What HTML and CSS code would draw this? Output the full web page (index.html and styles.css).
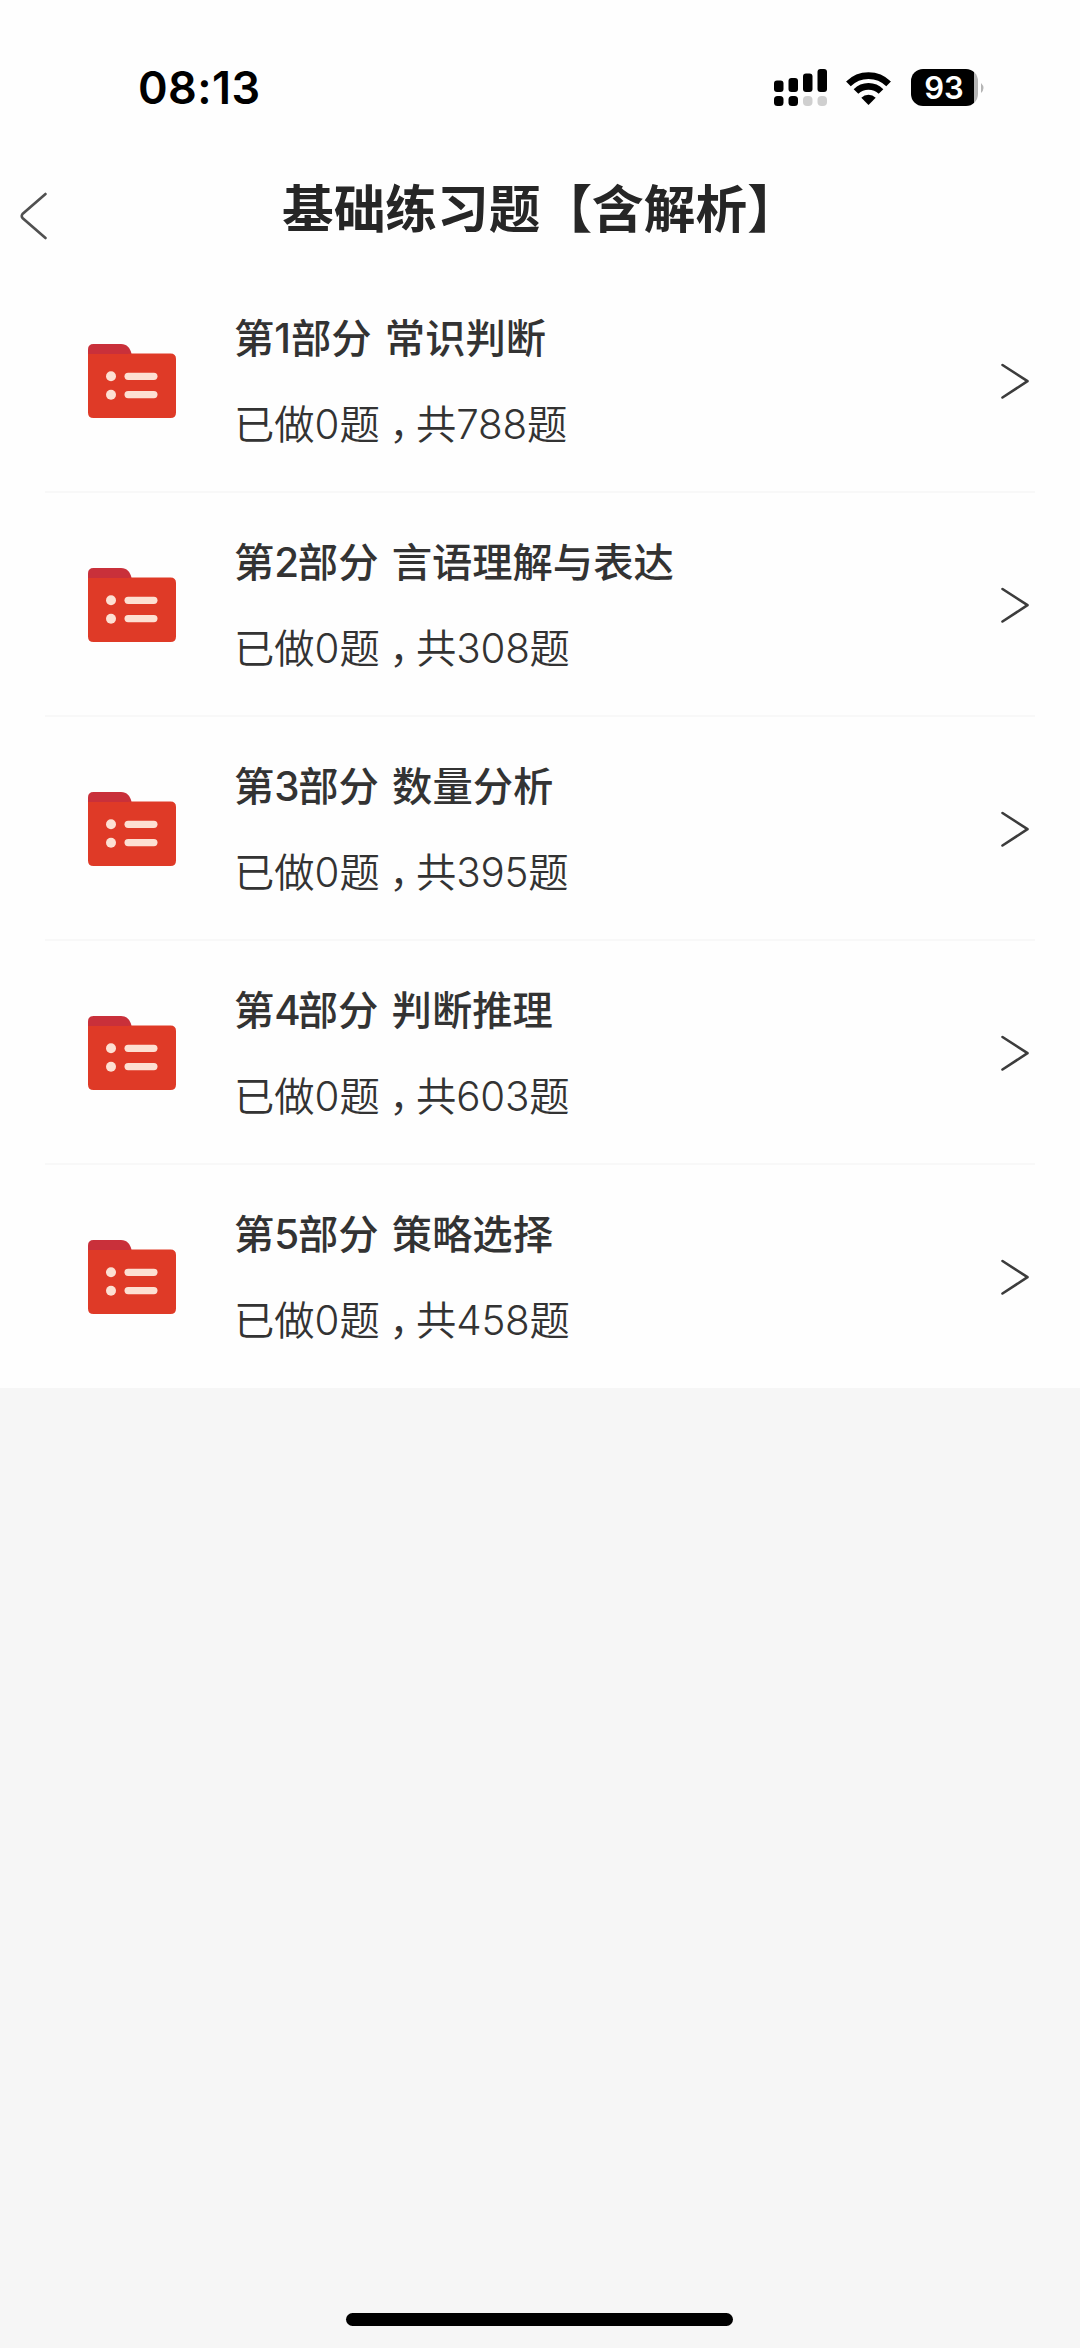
FILE: index.html
```html
<!DOCTYPE html>
<html lang="zh-CN">
<head>
<meta charset="utf-8">
<title>基础练习题【含解析】</title>
<link rel="stylesheet" href="styles.css">
</head>
<body>
<svg class="symbols" aria-hidden="true">
  <symbol id="folder" viewBox="0 0 88 74">
    <path d="M0 12V5.500Q0 0 5.500 0H33C39 0 42 4 43.500 9.500V14H0Z" fill="#c9303a"/>
    <path d="M0 10H39Q42 9.500 44 9.500H82.500Q88 9.500 88 15V68.500Q88 74 82.500 74H5.500Q0 74 0 68.500Z" fill="#df3a27"/>
    <g fill="#fde0d3"><circle cx="23" cy="32.300" r="5"/><circle cx="23" cy="50.800" r="5"/><rect x="36.500" y="28.700" width="33" height="7.200" rx="3.600"/><rect x="36.500" y="47" width="33" height="7.200" rx="3.600"/></g>
  </symbol>
  <symbol id="chevron" viewBox="0 0 30 38">
    <path d="M2.500 3L27.500 19.200 2.500 35.500" fill="none" stroke="#3c3c3c" stroke-width="2.600" stroke-linecap="round" stroke-linejoin="round"/>
  </symbol>
</svg>
<div class="screen">
  <div class="status">
    <time class="clock">08:13</time>
    <div class="indicators">
      <svg class="signal" width="53" height="38" viewBox="0 0 53 38">
        <rect x="0" y="11.500" width="9.500" height="11.500" rx="3"/><rect x="14.500" y="9" width="9.500" height="14" rx="3"/><rect x="29" y="4.500" width="9.500" height="18.500" rx="3"/><rect x="43.500" y="0" width="9.500" height="23" rx="3"/>
        <rect x="0" y="27" width="9.500" height="10" rx="3.500"/><rect x="14.500" y="27" width="9.500" height="10" rx="3.500"/>
        <g fill="#cfcfcf"><rect x="29" y="27" width="9.500" height="10" rx="4"/><rect x="43.500" y="27" width="9.500" height="10" rx="4"/></g>
      </svg>
      <svg class="wifi" width="45" height="35" viewBox="0 0 45 35">
        <g fill="none" stroke="#000" stroke-width="6.600"><path d="M2.400 12.900A28.500 28.500 0 0 1 42.600 12.900"/><path d="M10 20.500A17.700 17.700 0 0 1 35 20.500"/></g>
        <path d="M22.500 34L15.300 26.800A10.200 10.200 0 0 1 29.700 26.800Z"/>
      </svg>
      <div class="battery"><span class="level">93</span><svg width="5" height="10" viewBox="0 0 5 10"><path d="M0 0Q5 5 0 10Z" fill="#b5b5b5"/></svg></div>
    </div>
  </div>
  <header class="nav">
    <svg class="back" width="28" height="48" viewBox="0 0 28 48"><path d="M25.500 2L2.500 22Q1 24 2.500 26L25.500 46" fill="none" stroke="#505050" stroke-width="2.600" stroke-linecap="round"/></svg>
    <h1 class="heading">基础练习题【含解析】</h1>
  </header>
  <ul class="list">
    <li class="row"><svg class="folder"><use href="#folder"/></svg><div class="info"><h2 class="name">第1部分 常识判断</h2><p class="count">已做0题<span class="comma">，</span>共<span class="total">788</span>题</p></div><svg class="chevron"><use href="#chevron"/></svg></li>
    <li class="row"><svg class="folder"><use href="#folder"/></svg><div class="info"><h2 class="name">第<span class="digit">2</span>部分 言语理解与表达</h2><p class="count">已做0题<span class="comma">，</span>共<span class="total">308</span>题</p></div><svg class="chevron"><use href="#chevron"/></svg></li>
    <li class="row"><svg class="folder"><use href="#folder"/></svg><div class="info"><h2 class="name">第<span class="digit">3</span>部分 数量分析</h2><p class="count">已做0题<span class="comma">，</span>共<span class="total">395</span>题</p></div><svg class="chevron"><use href="#chevron"/></svg></li>
    <li class="row"><svg class="folder"><use href="#folder"/></svg><div class="info"><h2 class="name">第<span class="digit wide">4</span>部分 判断推理</h2><p class="count">已做0题<span class="comma">，</span>共<span class="total">603</span>题</p></div><svg class="chevron"><use href="#chevron"/></svg></li>
    <li class="row"><svg class="folder"><use href="#folder"/></svg><div class="info"><h2 class="name">第<span class="digit">5</span>部分 策略选择</h2><p class="count">已做0题<span class="comma">，</span>共<span class="total">458</span>题</p></div><svg class="chevron"><use href="#chevron"/></svg></li>
  </ul>
  <div class="home"></div>
</div>
</body>
</html>
```
FILE: styles.css
```css
* { box-sizing: border-box; margin: 0; padding: 0; }
body { background: #f6f6f6; font-family: Inter, "Noto Sans CJK SC", sans-serif; color: #333; }
svg { display: block; flex: none; }
.symbols { display: none; }
.screen { width: 1080px; height: 2348px; display: flex; flex-direction: column; overflow: hidden; }
.status { height: 160px; flex: none; background: #fefefe; display: flex; justify-content: space-between; padding: 69px 94px 0 138px; color: #000; }
.clock { font-size: 45px; line-height: 38px; font-weight: 600; letter-spacing: .4px; }
.indicators { display: flex; height: 38px; }
.wifi { margin: 2px 0 0 19px; }
.battery { display: flex; align-items: center; margin-left: 20px; gap: 3px; height: 37px; }
.level { width: 67px; height: 37px; border-radius: 12px; background: linear-gradient(90deg, #000 63px, #b5b5b5 63px); color: #fff; font-size: 31px; font-weight: 600; line-height: 38px; text-align: center; padding-right: 1px; }
.nav { height: 109px; flex: none; background: #fefefe; display: flex; align-items: flex-start; padding-left: 20px; }
.back { margin-top: 32px; }
.heading { margin: 11px 0 0 234px; font-size: 51.700px; line-height: 76px; font-weight: 700; color: #262626; white-space: nowrap; text-spacing-trim: space-all; }
.list { list-style: none; background: #fefefe; padding: 0 45px; }
.row { height: 224px; border-bottom: 2px solid #f8f8f8; display: flex; align-items: center; padding: 2px 5px 0 43px; }
.row:last-child { height: 223px; border: 0; padding-top: 0; }
.folder { width: 88px; height: 74px; }
.info { flex: 1; margin: 2px 0 0 58px; white-space: nowrap; }
.name { font-size: 40.300px; line-height: 60px; font-weight: 500; word-spacing: 2.500px; }
.digit { letter-spacing: -1.300px; }
.wide { letter-spacing: -3px; }
.count { margin-top: 26px; font-size: 40.300px; line-height: 60px; font-weight: 350; }
.comma { font-feature-settings: "halt"; padding: 0 6.500px 0 9.500px; }
.total { letter-spacing: -.2px; }
.chevron { width: 30px; height: 38px; }
.home { width: 387px; height: 13px; margin: auto auto 22px 346px; border-radius: 7px; background: #000; flex: none; }
```
